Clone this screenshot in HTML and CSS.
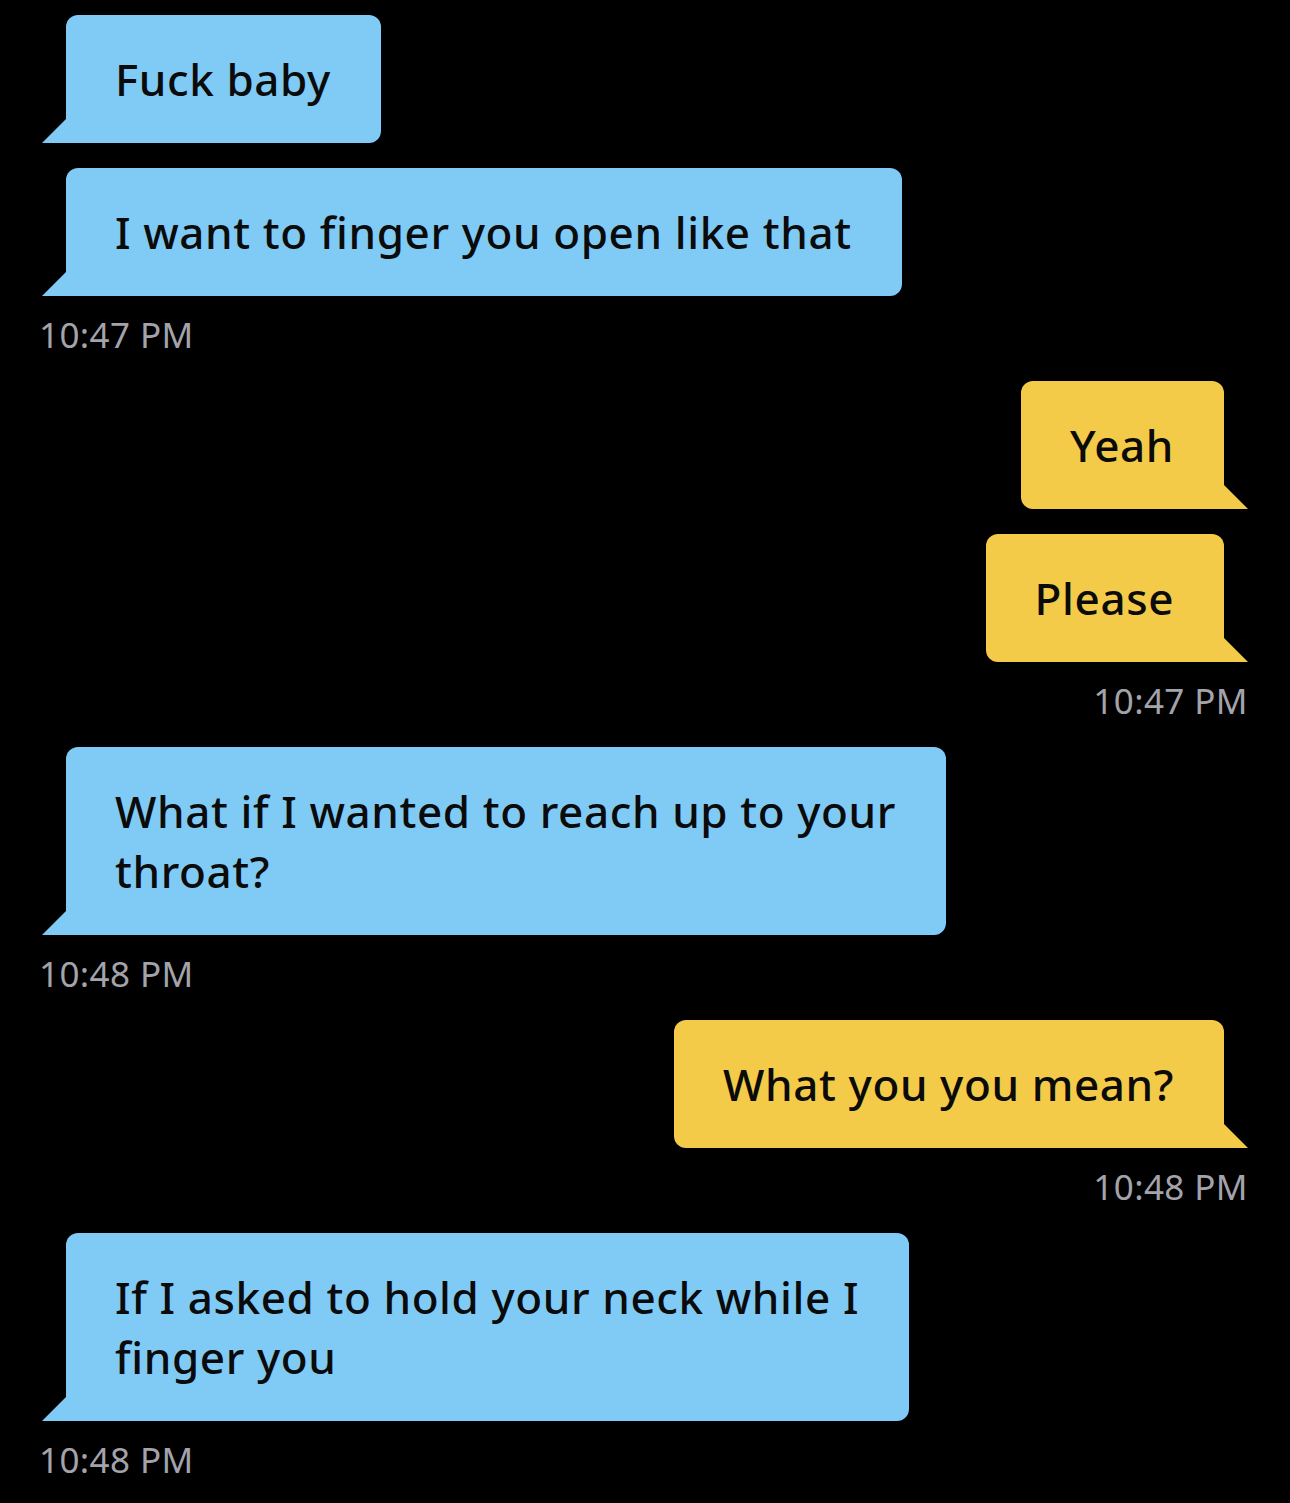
FILE: index.html
```html
<!DOCTYPE html>
<html lang="en">
<head>
    <meta charset="UTF-8">
    <meta name="viewport" content="width=device-width, initial-scale=1.0">
    <title>Chat</title>
    <link rel="stylesheet" href="styles.css">
</head>
<body>
    <div class="chat">

        <!-- Messages recus -->
        <div class="group theirs">
            <div class="bubble">Fuck baby</div>
            <div class="bubble">I want to finger you open like that</div>
            <div class="time">10:47 PM</div>
        </div>

        <!-- Messages envoyes -->
        <div class="group mine">
            <div class="bubble">Yeah</div>
            <div class="bubble">Please</div>
            <div class="time">10:47 PM</div>
        </div>

        <div class="group theirs">
            <div class="bubble">What if I wanted to reach up to your<br>throat?</div>
            <div class="time">10:48 PM</div>
        </div>

        <div class="group mine">
            <div class="bubble">What you you mean?</div>
            <div class="time">10:48 PM</div>
        </div>

        <div class="group theirs">
            <div class="bubble">If I asked to hold your neck while I<br>finger you</div>
            <div class="time">10:48 PM</div>
        </div>

    </div>
</body>
</html>
```

FILE: styles.css
```css
* {
    margin: 0;
    padding: 0;
    box-sizing: border-box;
}

body {
    font-family: "Noto Sans", "Open Sans", sans-serif;
    background-color: #000;
    color: #0b0b0b;
    width: 1290px;
    height: 1503px;
    overflow: hidden;
}

.chat {
    display: flex;
    flex-direction: column;
    gap: 26px;
    padding: 15px 42px 0 42px;
}

.group {
    display: flex;
    flex-direction: column;
    gap: 25px;
}

.group.theirs {
    align-items: flex-start;
}

.group.mine {
    align-items: flex-end;
}

.bubble {
    position: relative;
    padding: 34px 50px 34px 49px;
    font-size: 44px;
    line-height: 60px;
    font-weight: 500;
    letter-spacing: 0.6px;
    white-space: nowrap;
    border-radius: 12px;
}

.theirs .bubble {
    margin-left: 24px;
    background-color: #80cbf6;
    border-bottom-left-radius: 0;
}

.mine .bubble {
    margin-right: 24px;
    background-color: #f4cb48;
    border-bottom-right-radius: 0;
}

/* petite queue de la bulle */
.bubble::before {
    content: "";
    position: absolute;
    bottom: 0;
    width: 25px;
    height: 25px;
}

.theirs .bubble::before {
    left: -24px;
    background-color: #80cbf6;
    clip-path: polygon(100% 0, 100% 100%, 0 100%);
}

.mine .bubble::before {
    right: -24px;
    background-color: #f4cb48;
    clip-path: polygon(0 0, 100% 100%, 0 100%);
}

.time {
    margin-top: -6px;
    font-size: 35px;
    line-height: 40px;
    letter-spacing: 0.4px;
    color: #a3a3ab;
}

.theirs .time {
    margin-left: -3px;
}
```
